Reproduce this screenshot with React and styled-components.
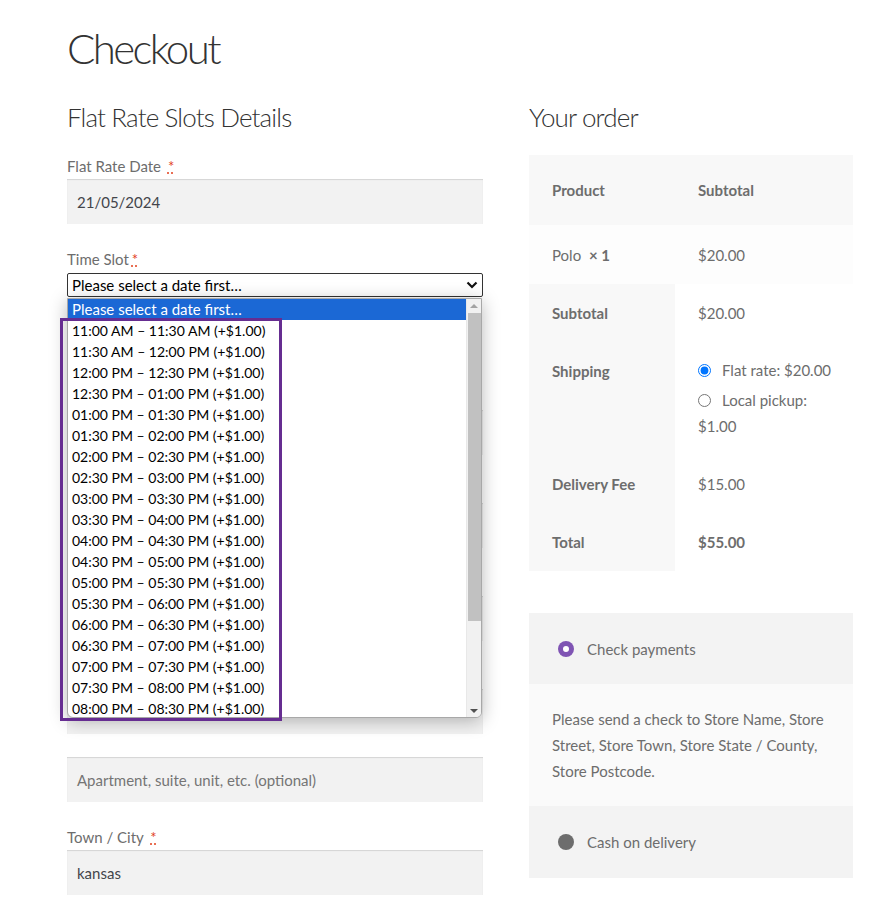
import React from 'react';
import styled, { createGlobalStyle } from 'styled-components';

const GlobalStyle = createGlobalStyle`
  * { box-sizing: border-box; }
  body {
    margin: 0;
    background: #fff;
    color: #6d6d6d;
    font-family: Lato, 'Noto Sans', sans-serif;
    font-size: 16px;
  }
`;

const pad = (n) => String(n).padStart(2, '0');
const fmt = (mins) => {
  const h24 = Math.floor(mins / 60);
  const m = mins % 60;
  const suffix = h24 >= 12 ? 'PM' : 'AM';
  const h12 = h24 % 12 === 0 ? 12 : h24 % 12;
  return `${pad(h12)}:${pad(m)} ${suffix}`;
};
const slots = Array.from({ length: 19 }, (_, i) => {
  const start = 11 * 60 + i * 30;
  return `${fmt(start)} – ${fmt(start + 30)} (+$1.00)`;
});

const Page = styled.div`
  width: 786px;
  margin-left: 67px;
  padding-top: 22px;
`;

const Title = styled.h1`
  margin: 0 0 26px;
  font-size: 42px;
  font-weight: 300;
  line-height: 52px;
  color: #333;
  letter-spacing: -2.6px;
`;

const Columns = styled.div`
  display: grid;
  grid-template-columns: 416px 324px;
  column-gap: 46px;
  align-items: start;
`;

const Column = styled.div`
  display: flex;
  flex-direction: column;
`;

const SectionTitle = styled.h3`
  margin: 0 0 ${(p) => p.gap ?? 19}px;
  height: 34px;
  font-size: 26px;
  font-weight: 300;
  line-height: 34px;
  color: #333;
  letter-spacing: -0.85px;
`;

const Field = styled.div`
  display: flex;
  flex-direction: column;
  margin-bottom: ${(p) => (p.tight ? 23 : 22)}px;
`;

const Row = styled.div`
  display: grid;
  grid-template-columns: 1fr 1fr;
  column-gap: 24px;
`;

const Label = styled.label`
  display: block;
  height: 26px;
  line-height: 26px;
  font-size: 15px;
  color: #6d6d6d;
`;

const Req = styled.abbr`
  color: #e2401c;
  text-decoration: underline dotted;
  margin-left: 3px;
`;

const Input = styled.div`
  height: 45px;
  display: flex;
  align-items: center;
  padding: 0 10px;
  background: #f2f2f2;
  box-shadow: inset 0 1px 1px rgba(0, 0, 0, 0.125);
  font-size: 15px;
  color: ${(p) => (p.$placeholder ? '#757575' : '#43454b')};
`;

const SelectWrap = styled.div`
  position: relative;
  margin-top: 1px;
`;

const Select = styled.div`
  height: 24px;
  display: flex;
  align-items: center;
  justify-content: space-between;
  padding: 0 4px;
  border: 1px solid #333;
  border-radius: 2px;
  background: #fff;
  color: #000;
  font-size: 15px;
`;

const Dropdown = styled.div`
  position: absolute;
  top: 25px;
  left: 0;
  width: 415px;
  height: 420px;
  display: flex;
  background: #fff;
  border: 1px solid #a8a8a8;
  border-radius: 0 0 6px 6px;
  box-shadow: 0 3px 18px rgba(0, 0, 0, 0.28);
  overflow: hidden;
  z-index: 5;
`;

const Options = styled.ul`
  flex: 1;
  margin: 0;
  padding: 0;
  list-style: none;
`;

const Option = styled.li`
  height: 21px;
  line-height: 21px;
  padding-left: 4px;
  font-size: ${(p) => (p.$active ? 15 : 14)}px;
  white-space: nowrap;
  color: ${(p) => (p.$active ? '#fff' : '#000')};
  background: ${(p) => (p.$active ? '#1b68d5' : 'transparent')};
`;

const Scrollbar = styled.div`
  width: 15px;
  display: flex;
  flex-direction: column;
  align-items: center;
  background: #f1f1f1;
  border-left: 1px solid #e8e8e8;
`;

const Arrow = styled.div`
  width: 0;
  height: 0;
  margin: ${(p) => (p.$down ? '6px 0 4px' : '5px 0 5px')};
  border-left: 4px solid transparent;
  border-right: 4px solid transparent;
  ${(p) => (p.$down ? 'border-top: 4px solid #505050;' : 'border-bottom: 4px solid #a3a3a3;')}
`;

const Thumb = styled.div`
  width: 13px;
  height: 308px;
  background: #c1c1c1;
`;

const Track = styled.div`
  flex: 1;
`;

const Highlight = styled.div`
  position: absolute;
  top: 45px;
  left: -7px;
  width: 222px;
  height: 403px;
  border: 3px solid #662d91;
  z-index: 6;
  pointer-events: none;
`;

const Table = styled.table`
  width: 324px;
  margin-top: 2px;
  table-layout: fixed;
  border-collapse: collapse;
  font-size: 15px;
  color: #6d6d6d;
`;

const Th = styled.th`
  width: ${(p) => (p.$auto ? 'auto' : '146px')};
  text-align: left;
  vertical-align: top;
  font-weight: 700;
  padding: ${(p) => p.$pad || '19px 23px'};
  line-height: 20px;
  background: ${(p) => p.$bg || '#f8f8f8'};
`;

const Td = styled.td`
  text-align: left;
  vertical-align: top;
  padding: ${(p) => p.$pad || '19px 23px'};
  line-height: 20px;
  font-weight: ${(p) => (p.$bold ? 700 : 400)};
  background: ${(p) => p.$bg || '#fff'};
`;

const Qty = styled.strong`
  font-weight: 700;
  margin-left: 4px;
`;

const ShipList = styled.ul`
  margin: 0;
  padding: 0;
  list-style: none;
  line-height: 26px;
`;

const ShipItem = styled.li`
  display: block;
  & + & {
    margin-top: 4px;
  }
`;

const Radio = styled.input`
  width: 13px;
  height: 13px;
  margin: 0 11px 0 0;
  vertical-align: -1px;
`;

const Payment = styled.div`
  margin-top: 42px;
  background: #f3f3f3;
`;

const Method = styled.div`
  height: ${(p) => p.$h}px;
  display: flex;
  align-items: center;
  gap: 13px;
  padding-left: 29px;
  font-size: 15px;
  color: #6d6d6d;
`;

const Dot = styled.span`
  width: 16px;
  height: 16px;
  border-radius: 50%;
  background: ${(p) => (p.$checked ? '#fff' : '#6d6d6d')};
  box-shadow: ${(p) => (p.$checked ? 'inset 0 0 0 5px #7f54b3' : 'none')};
`;

const Box = styled.div`
  padding: 22px 23px;
  background: #fafafa;
  font-size: 15px;
  line-height: 26px;
  color: #6d6d6d;
`;

const Chevron = () => (
  <svg width="12" height="8" viewBox="0 0 12 8">
    <path d="M1.5 1.5 6 6l4.5-4.5" fill="none" stroke="#111" strokeWidth="2.2" />
  </svg>
);

export default function App() {
  return (
    <>
      <GlobalStyle />
      <Page>
        <Title>Checkout</Title>
        <Columns>
          <Column>
            <SectionTitle>Flat Rate Slots Details</SectionTitle>
            <Field>
              <Label>
                Flat Rate Date <Req title="required">*</Req>
              </Label>
              <Input>21/05/2024</Input>
            </Field>
            <Field>
              <Label>
                Time Slot<Req title="required">*</Req>
              </Label>
              <SelectWrap>
                <Select>
                  Please select a date first…
                  <Chevron />
                </Select>
                <Dropdown>
                  <Options>
                    <Option $active>Please select a date first…</Option>
                    {slots.map((s) => (
                      <Option key={s}>{s}</Option>
                    ))}
                  </Options>
                  <Scrollbar>
                    <Arrow />
                    <Thumb />
                    <Track />
                    <Arrow $down />
                  </Scrollbar>
                </Dropdown>
                <Highlight />
              </SelectWrap>
            </Field>
            {/* billing fields hidden under the open dropdown */}
            <SectionTitle gap={31} />
            <Row>
              <Field>
                <Label />
                <Input />
              </Field>
              <Field>
                <Label />
                <Input />
              </Field>
            </Row>
            <Field>
              <Label />
              <Input />
            </Field>
            <Field>
              <Label />
              <Input />
            </Field>
            <Field tight>
              <Label />
              <Input />
            </Field>
            <Field>
              <Input $placeholder>Apartment, suite, unit, etc. (optional)</Input>
            </Field>
            <Field>
              <Label>
                Town / City <Req>*</Req>
              </Label>
              <Input>kansas</Input>
            </Field>
          </Column>
          <Column>
            <SectionTitle>Your order</SectionTitle>
            <Table>
              <thead>
                <tr>
                  <Th $pad="25px 23px">Product</Th>
                  <Th $pad="25px 23px" $auto>Subtotal</Th>
                </tr>
              </thead>
              <tbody>
                <tr>
                  <Td $bg="#fdfdfd" $pad="20px 23px 19px">
                    Polo <Qty>× 1</Qty>
                  </Td>
                  <Td $bg="#fdfdfd" $pad="20px 23px 19px">$20.00</Td>
                </tr>
              </tbody>
              <tfoot>
                <tr>
                  <Th>Subtotal</Th>
                  <Td>$20.00</Td>
                </tr>
                <tr>
                  <Th>Shipping</Th>
                  <Td $pad="15px 12px 16px 23px">
                    <ShipList>
                      <ShipItem>
                        <Radio type="radio" name="ship" defaultChecked />
                        Flat rate: $20.00
                      </ShipItem>
                      <ShipItem>
                        <Radio type="radio" name="ship" />
                        Local pickup: $1.00
                      </ShipItem>
                    </ShipList>
                  </Td>
                </tr>
                <tr>
                  <Th>Delivery Fee</Th>
                  <Td>$15.00</Td>
                </tr>
                <tr>
                  <Th>Total</Th>
                  <Td $bold>$55.00</Td>
                </tr>
              </tfoot>
            </Table>
            <Payment>
              <Method $h={71}>
                <Dot $checked />
                Check payments
              </Method>
              <Box>
                Please send a check to Store Name, Store Street, Store Town, Store
                State / County, Store Postcode.
              </Box>
              <Method $h={72}>
                <Dot />
                Cash on delivery
              </Method>
            </Payment>
          </Column>
        </Columns>
      </Page>
    </>
  );
}
